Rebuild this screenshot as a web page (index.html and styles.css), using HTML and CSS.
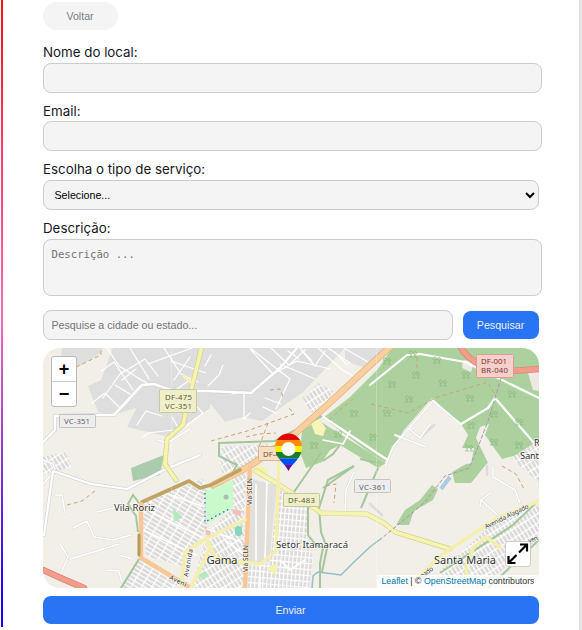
FILE: index.html
```html
<!DOCTYPE html>
<html lang="pt-BR">
<head>
<meta charset="utf-8">
<title>Cadastro de local</title>
<link rel="stylesheet" href="styles.css">
</head>
<body>
<main class="page">
<div class="rail"></div>
<form class="form">
  <button type="button" class="back">Voltar</button>
  <label class="label" for="nome">Nome do local:</label>
  <input class="field wide name" id="nome">
  <label class="label tight" for="email">Email:</label>
  <input class="field wide email" id="email">
  <label class="label" for="tipo">Escolha o tipo de serviço:</label>
  <select class="field select" id="tipo"><option>Selecione...</option></select>
  <label class="label" for="desc">Descrição:</label>
  <textarea class="field wide area" id="desc" placeholder="Descrição ..."></textarea>
  <div class="search">
    <input class="field query" placeholder="Pesquise a cidade ou estado...">
    <button type="button" class="primary find">Pesquisar</button>
  </div>
  <div class="map">
    <svg class="tiles" viewBox="43 348 496 240" width="496" height="240">
      <defs>
        <pattern id="blocks" width="9" height="4" patternUnits="userSpaceOnUse" patternTransform="rotate(31)">
          <rect width="9" height="4" fill="#dcdad8"/><path d="M0 .5H9M.5 0V4" stroke="#fff" stroke-width="1.5"/>
        </pattern>
        <pattern id="blocks2" width="4" height="8" patternUnits="userSpaceOnUse" patternTransform="rotate(-32)">
          <rect width="4" height="8" fill="#dcdad8"/><path d="M0 .5H4M.5 0V8" stroke="#fff" stroke-width="1.5"/>
        </pattern>
        <pattern id="blocks3" width="4" height="6" patternUnits="userSpaceOnUse" patternTransform="rotate(5)">
          <rect width="4" height="6" fill="#dcdad8"/><path d="M0 .5H4M.5 0V6" stroke="#fff" stroke-width="1.6"/>
        </pattern>
        <g id="tree" fill="none" stroke="#86b77d" stroke-width=".7"><path d="M2 4V7M0 7H4M6 4V7M5 7H8"/><circle cx="2" cy="2.500" r="1.600"/><circle cx="6" cy="3" r="1.500"/></g>
        <clipPath id="pinclip"><path d="M288.500 471C285 463 275 459 275 447A13.500 13.500 0 0 1 302 447C302 459 292 463 288.500 471Z"/></clipPath>
      </defs>
      <rect x="43" y="348" width="496" height="240" fill="#f2efe9"/>

      <g fill="#dededf">
        <path d="M62 348H103L101 353 76 368 60 364Z"/>
        <path d="M113 348H345L303 392 262 421 242 417 225 422 210 403 183 409 139 407 113 415 98 412 88 386 101 380Z"/>
        <path d="M138 405 199 398 210 396V408L184 428 165 436 127 427Z"/>
        <path d="M302 397 322 380 333 391 327 409 312 413Z"/>
        <path d="M345 348H391L369 369 345 361Z"/>
      </g>
      <path d="M304 391 341 361 355 377 326 405 303 397Z" fill="#f2efe9"/>

      <path d="M392 348H539V449L502 459 485 435 489 424 480 427 476 438 488 463 470 470 474 448 462 448 468 435 461 424 432 398 404 430 385 462 369 452 323 418 350 397 378 369Z" fill="#add19e"/>
      <path d="M318 420 386 463 378 468 340 445 330 450 322 462 306 468 300 452 302 431Z" fill="#add19e"/>
      <path d="M396 525 405 510 420 500 432 485 438 489 433 500 414 511 409 525Z" fill="#add19e"/>
      <path d="M452 472 466 464 488 462 471 483 455 483Z" fill="#add19e"/>
      <path d="M318 418 326 428 323 436 315 434 311 423Z" fill="#f7f5ba"/>
      <path d="M131 468 164 455 160 475 133 481Z" fill="#abcbad"/>
      <path d="M463 360 474 362 471 372 462 368ZM528 373 539 371V391L533 390Z" fill="#eee9e3"/>

      <path d="M141 503 203 479 207 490 207 527 182 566 146 556ZM139 559 180 581 175 588H121Z" fill="url(#blocks)"/>
      <path d="M233 476 247 473 243 535 205 535 233 508ZM205 540 245 530V588H192Z" fill="url(#blocks2)"/>
      <path d="M253 479 277 486 269 562 248 562Z" fill="#e2e0dd"/>
      <path d="M278 488 308 505 308 540 313 558 309 588H248V564H270Z" fill="url(#blocks3)"/>
      <path d="M43 457 65 452 72 467 43 475ZM220 447 275 444 276 453 247 468 222 473Z" fill="url(#blocks2)"/>
      <path d="M511 458 539 440V482L524 470ZM440 571 488 528 539 505V543L507 566 480 588H431Z" fill="url(#blocks2)"/>
      <path d="M302 401 318 383 333 391 325 407 312 412Z" fill="url(#blocks2)"/>

      <path d="M204 492 233 480 233 508 207 524Z" fill="#c8facc"/>
      <path d="M205 493V522L231 508" fill="none" stroke="#3555c5" stroke-width="1.200" stroke-dasharray="1.500 3"/>
      <circle cx="226" cy="497" r="2.500" fill="#aebdb0"/>
      <path d="M173 509 183 517 174 522ZM198 575 205 571 209 575 203 580Z" fill="#b2eac0"/>
      <rect x="235" y="526" width="7" height="10" rx="3" fill="#86d8bf"/>
      <path d="M233 509 242 511 240 516 233 514ZM205 526 211 530 210 538 206 534Z" fill="#eec2b8"/>
      <path d="M267 568 277 563 276 576ZM257 465 270 470 262 476 252 472Z" fill="#f5f2ab"/>

      <g fill="none" stroke="#fff" stroke-linejoin="round" stroke-linecap="round">
        <path stroke="#d3d3d3" stroke-width="4" d="M43 442 55 430V416L100 415 114 415 142 385 154 384 174 391 208 391 251 393 266 380 280 368 297 348"/>
        <path stroke-width="2.600" d="M43 442 55 430V416L100 415 114 415 142 385 154 384 174 391 208 391 251 393 266 380 280 368 297 348"/>
        <path stroke-width="1.200" d="M107 348 119 366 148 384M101 371 114 362 133 390M92 403 105 393 119 407M103 398 120 374 145 359 158 376M115 385 130 394M122 380 136 369M130 348 149 379M164 348 181 374 198 382M148 364 192 348M171 361 206 373M174 380 190 357M177 389 191 379M208 386 219 375 223 365M205 366 211 355M232 394 244 392V419L250 413M250 348 290 379 276 409M271 348 289 365 305 350M280 364 315 379M251 350 273 374 297 361 330 369M300 348 311 360M318 348 341 369 353 376M328 348 350 363M344 348 368 362M265 398 281 404M263 407 276 413M302 351 315 366 325 351M335 352 347 365M288 351 299 359M137 425 146 411 162 416M143 437 148 433 182 429 203 413 191 401M160 407 179 413 188 407M179 429 172 417"/>
        <g stroke="#dcdcdc" stroke-width="2.600">
          <path d="M43 484 53 473M97 512 117 507 121 502M73 528 87 521 94 537 113 540 131 535M60 544 68 557 60 576M70 559 97 551 119 544M158 440 167 443 190 429M43 460 53 464 55 470M55 495 62 495 65 513M119 555 133 559M107 570 119 571 122 583"/>
          <path d="M385 467 393 447 404 434 432 402M408 428 420 438 430 424M395 435 426 447M420 438 434 425M345 516 346 490 354 472M480 507 481 500 492 492M481 500 501 518M493 466V477L515 490 520 503M370 504 382 515M487 466V475"/>
        </g>
        <path stroke-width="1.500" d="M43 484 53 473M97 512 117 507 121 502M73 528 87 521 94 537 113 540 131 535M60 544 68 557 60 576M70 559 97 551 119 544M158 440 167 443 190 429M43 460 53 464 55 470M55 495 62 495 65 513M119 555 133 559M107 570 119 571 122 583M385 467 393 447 404 434 432 402M408 428 420 438 430 424M395 435 426 447M345 516 346 490 354 472M480 507 481 500 492 492M481 500 501 518M493 466V477L515 490 520 503"/>
        <path stroke="#d5d5d5" stroke-width="3.500" d="M44 535 53 471 91 484 127 489 166 469 200 455"/>
        <path stroke-width="2.200" d="M44 535 53 471 91 484 127 489 166 469 200 455"/>
        <path stroke-width="2.200" d="M370 385 407 355 420 354 465 362 539 398M461 424 488 408 495 398 535 444M322 416 386 459M311 416 354 377"/>
        <path stroke-width="1.600" d="M432 400 461 424M323 440 343 444 350 431M151 512 207 540M143 530 196 555M165 493 205 507M207 529 241 542M225 540 246 556M267 480 265 560M256 485V560M260 565V588M280 560 290 570 305 560"/>
      </g>

      <g fill="none" stroke="#a5c69c" stroke-width="2">
        <path d="M218 443 275 441 322 416M219 444V456L237 465 233 472M321 453 294 492M354 466 323 488M308 505V535L316 545 323 548 320 563V588M139 503 133 495 128 504 136 516 138 532M139 559 121 588M340 445 333 454 323 461M360 459 378 463"/>
        <path d="M354 466 328 480 319 508 321 532 327 548 322 572M378 468 361 508M440 573 513 525 539 500M488 588 539 540"/>
      </g>
      <path d="M312 588 313 576 318 572 341 575 354 562 371 546 382 538" fill="none" stroke="#93bfc6" stroke-width="1.500"/>
      <path d="M441 489 450 477" stroke="#aacce0" stroke-width="4"/>

      <g fill="none" stroke-linejoin="round" stroke-linecap="round">
        <path d="M213 485 248 467 288 440 325 407 391 346" stroke="#e3b17e" stroke-width="7"/>
        <path d="M213 485 248 467 288 440 325 407 391 346" stroke="#f9cfa0" stroke-width="5.500"/>
        <path d="M142 502 189 481 200 488 211 485 240 470" stroke="#c0a365" stroke-width="3.600"/>
        <path d="M141 504V558L191 588M250 467 245 588" stroke="#f8c797" stroke-width="4.500"/>
        <path d="M139 535V555" stroke="#b69b55" stroke-width="3"/>
        <path d="M202 346 186 411 183 425 167 439 165 464 176 480" stroke="#d2d094" stroke-width="5"/>
        <path d="M202 346 186 411 183 425 167 439 165 464 176 480" stroke="#f5f6aa" stroke-width="3.600"/>
        <path d="M256 471 281 486 306 502 321 513 367 514 384 523 395 532 450 549" stroke="#d3d198" stroke-width="5"/>
        <path d="M256 471 281 486 306 502 321 513 367 514 384 523 395 532 450 549" stroke="#f4f5ae" stroke-width="3.800"/>
        <path d="M279 457 276 551 260 564 230 561 215 558 207 538 245 520M181 588 185 552 207 538M468 588 466 566 474 547 486 537 501 548M539 501 497 518 440 556 408 588M207 540 209 550 191 588" stroke="#f3f0ad" stroke-width="3.500"/>
        <path d="M184 376 191 382" stroke="#f5f3b0" stroke-width="3"/>
        <path d="M43 570 63 579 84 588M460 346C469 363 489 370 511 371L539 369" stroke="#d98679" stroke-width="6.500"/>
        <path d="M43 570 63 579 84 588M460 346C469 363 489 370 511 371L539 369" stroke="#f39c8b" stroke-width="5"/>
      </g>

      <path fill="none" stroke="#c7a56e" stroke-width="1" stroke-dasharray="4 3" d="M76 367 101 355V348M67 505 82 501 95 491M211 441 247 431 294 414 289 408M246 437 259 434 276 433M268 423 259 447M329 420 356 396M371 404 408 413 435 398 488 382 496 397M417 357V373M270 390 280 389 283 397M326 486 336 484 334 503M502 466 516 474 524 489"/>
      <path d="M503 372 488 421 476 452 469 468 445 476 425 502 399 524 382 538" fill="none" stroke="#a995ac" stroke-width="1" stroke-dasharray="4 2"/>
      <g>
        <use href="#tree" x="383" y="357"/><use href="#tree" x="409" y="350"/><use href="#tree" x="433" y="356"/><use href="#tree" x="412" y="371"/><use href="#tree" x="388" y="380"/><use href="#tree" x="439" y="379"/><use href="#tree" x="462" y="371"/><use href="#tree" x="405" y="395"/><use href="#tree" x="466" y="394"/><use href="#tree" x="508" y="390"/><use href="#tree" x="383" y="409"/><use href="#tree" x="350" y="409"/><use href="#tree" x="490" y="410"/><use href="#tree" x="515" y="418"/><use href="#tree" x="467" y="421"/><use href="#tree" x="369" y="433"/><use href="#tree" x="490" y="438"/><use href="#tree" x="515" y="441"/><use href="#tree" x="465" y="444"/><use href="#tree" x="310" y="441"/><use href="#tree" x="334" y="430"/>
      </g>
      <path d="M376.500 348V588M171.500 348V588" stroke="#fff" stroke-width=".6" opacity=".4"/>

      <g>
        <rect x="59.500" y="414.500" width="36" height="13" rx="1" fill="#ededee" stroke="#c4c4c6"/><rect x="354.500" y="479.500" width="36" height="13" rx="1" fill="#ededee" stroke="#c4c4c6"/>
        <rect x="159.500" y="389.500" width="37" height="23" rx="1" fill="#eff0cb" stroke="#c8c99a"/><rect x="283.500" y="493.500" width="36" height="13" rx="1" fill="#eff0cb" stroke="#c8c99a"/>
        <rect x="258.500" y="446.500" width="37" height="14" rx="1" fill="#f7dec4" stroke="#d9b58f"/>
        <rect x="476.500" y="354.500" width="37" height="23" rx="1" fill="#f5cfc9" stroke="#dc9d94"/>
      </g>
      <g class="place shield-text">
        <text x="64" y="424.300" textLength="26" fill="#666">VC-351</text><text x="359" y="489.500" textLength="27" fill="#666">VC-361</text>
        <text x="165" y="399.500" textLength="27">DF-475</text><text x="165" y="409" textLength="27">VC-351</text>
        <text x="288" y="503" textLength="27">DF-483</text><text x="263" y="457" fill="#765634">DF-4</text>
        <text x="481" y="363.500" textLength="26" fill="#7b3935">DF-001</text><text x="481" y="373" textLength="27" fill="#7b3935">BR-040</text>
      </g>
      <g class="place">
        <text x="114" y="511" textLength="41" font-size="9.500">Vila Roriz</text>
        <text x="206.500" y="563.500" textLength="31" font-size="11.500">Gama</text>
        <text x="276" y="548" textLength="72" font-size="9.500">Setor Itamaracá</text>
        <text x="434" y="563.500" textLength="62" font-size="11">Santa Maria</text>
        <text x="534" y="446" font-size="9">R</text><text x="520" y="458.500" textLength="19" font-size="9.500">Sant</text>
      </g>
      <g class="place street">
        <text transform="translate(252 505) rotate(-90)" textLength="27">Via SCLN</text>
        <text transform="translate(248 572) rotate(-90)" textLength="27">Via SCLN</text>
        <text transform="translate(188 577) rotate(-80)" textLength="28">Avenida</text>
        <text transform="translate(169 579) rotate(26)" textLength="18">Aveni</text>
        <text transform="translate(486 529) rotate(-26)" textLength="48">Avenida Alagado</text>
        <text transform="translate(415 583) rotate(-35)" textLength="23">Alagado</text>
        <text transform="translate(529 543) rotate(-20)" textLength="10">ven</text>
      </g>

      <g clip-path="url(#pinclip)">
        <path d="M275 433H302V440H275Z" fill="#e40303"/><path d="M275 440H302V446H275Z" fill="#ff8c00"/><path d="M275 446H302V452H275Z" fill="#ffed00"/><path d="M275 452H302V458.500H275Z" fill="#138026"/><path d="M275 458.500H302V465H275Z" fill="#004dff"/><path d="M275 465H302V472H275Z" fill="#750787"/>
      </g>
      <circle cx="288.500" cy="449" r="7" fill="#fff"/>
    </svg>
    <div class="zoom"><span class="zoom-btn">+</span><span class="zoom-btn">−</span></div>
    <div class="expand"><svg viewBox="0 0 24 24" width="24" height="24" fill="none" stroke="#000" stroke-width="2.200"><path d="M13 10.500 20.500 3M14 2.500H21V9.500M10.500 13 3 20.500M2.500 14V21H9.500"/></svg></div>
    <div class="credit"><a>Leaflet</a> | © <a>OpenStreetMap</a> contributors</div>
  </div>
  <button type="button" class="primary send">Enviar</button>
</form>
<div class="edge"></div>
</main>
</body>
</html>
```
FILE: styles.css
```css
* { box-sizing: border-box; }
body { margin: 0; background: #fff; font-family: "Liberation Sans", sans-serif; overflow: hidden; }
.page { display: flex; height: 630px; }
.rail { width: 2px; height: 627px; margin-left: 1px; flex: none; background: linear-gradient(#ff0d12 0, #ff3b6b 160px, #ff69b4 315px, #1a00fa 600px, #1000ff 627px); }
.form { width: 496px; margin-left: 40px; padding-top: 2px; flex: none; display: flex; flex-direction: column; align-items: flex-start; }
.edge { width: 3px; margin-left: auto; background: #e6e6e6; border-left: 1px solid #ddd; }
button { border: 0; padding: 0; font: 10.667px "Liberation Sans", sans-serif; }
.back { width: 75px; height: 28px; border-radius: 14px; background: #f4f4f4; color: #808080; margin-bottom: 12px; padding-right: 1px; }
.label { font: 13.333px/20px Inter, sans-serif; height: 20px; margin-bottom: 1px; color: #17171f; }
.tight { margin-bottom: 0; }
.field { height: 30px; border: 1px solid #ccc; border-radius: 8px; background: #f4f4f4; padding: 0 7.500px; font: 10.667px "Liberation Sans", sans-serif; flex: none; outline: 0; }
.field::placeholder { color: #757575; }
.wide { width: 499px; }
.name, .email { margin-bottom: 8px; }
.select { width: 496px; padding: 0 0 0 6.500px; margin-bottom: 8px; color: #000; }
.area { height: 57px; resize: none; padding: 8px 7.500px; font: 10.667px "DejaVu Sans Mono", monospace; margin: 0 0 14px; }
.search { display: flex; gap: 10px; align-items: center; width: 496px; height: 30px; margin-bottom: 8px; }
.query { width: 410px; margin: 0; }
.primary { background: #2974f3; color: #e9edf8; border-radius: 8px; height: 28px; }
.find { width: 76px; padding-right: 1px; }
.send { width: 496px; margin-top: 8px; padding-right: 1px; }
.map { position: relative; width: 496px; height: 240px; border-radius: 17px; overflow: hidden; flex: none; }
.tiles { display: block; }
.place { font-family: "Noto Sans", sans-serif; fill: #353535; stroke: #fff; stroke-width: 1.500px; stroke-opacity: .6; paint-order: stroke; }
.shield-text { font-size: 7.800px; font-weight: 400; fill: #5c5d34; stroke: none; }
.street { font-size: 6.500px; }
.zoom { position: absolute; left: 8px; top: 8px; width: 26px; border: 1px solid #bbb; border-radius: 3px; background: #fff; overflow: hidden; }
.zoom-btn { display: block; height: 24px; font: bold 18px/24px "Liberation Sans", sans-serif; text-align: center; color: #000; }
.zoom-btn + .zoom-btn { height: 25px; border-top: 1px solid #ccc; }
.expand { position: absolute; left: 462px; top: 193px; width: 26px; height: 26px; border: 1px solid #ccc; border-radius: 3px; background: #fff; }
.expand svg { display: block; }
.credit { position: absolute; right: 0; bottom: 0; height: 13px; padding: 0 4.500px; font-size: 8.800px; line-height: 13px; color: #333; background: rgba(255,255,255,.8); white-space: nowrap; }
.credit a { color: #0078a8; }
```
